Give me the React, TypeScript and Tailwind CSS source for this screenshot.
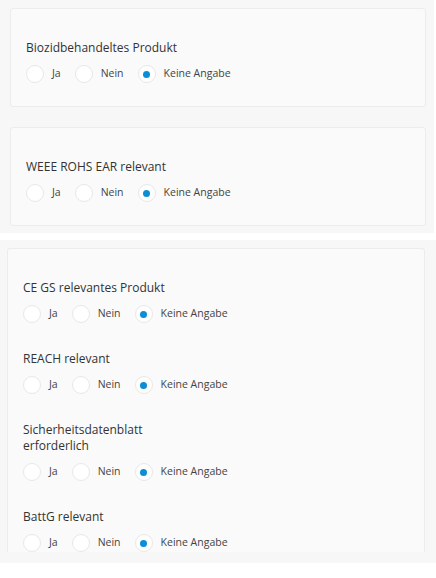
const font = { fontFamily: '"Open Sans", "Noto Sans", sans-serif' };

function RadioGroup() {
  const options = ["Ja", "Nein", "Keine Angabe"];
  return (
    <div className="flex items-center">
      {options.map((o) => {
        const on = o === "Keine Angabe";
        return (
          <label key={o} className="mr-[14px] flex items-center">
            <span className="flex h-[18px] w-[18px] items-center justify-center rounded-full border border-[#e8e8e8] bg-white">
              {on && <span className="h-[7px] w-[7px] rounded-full bg-[#0a8ed6]" />}
            </span>
            <span className="ml-[8px] text-[10.5px] text-[#444]">{o}</span>
          </label>
        );
      })}
    </div>
  );
}

function Field({ label }: { label: string }) {
  return (
    <div>
      <p className="mb-[9px] max-w-[160px] text-[12px] leading-[16px] text-[#333]">{label}</p>
      <RadioGroup />
    </div>
  );
}

export default function App() {
  return (
    <div className="h-[578px] w-[436px] overflow-hidden bg-white" style={font}>
      <div className="flex w-[434px] flex-col gap-[20px] bg-[#f7f7f7] pb-[7px] pl-[10px] pr-[8px] pt-[8px]">
        <div className="rounded-[3px] border border-[#ececec] bg-[#fafafa] px-[15px] pb-[23px] pt-[30px]">
          <p className="mb-[9px] text-[12px] leading-[17px] text-[#333]">Biozidbehandeltes Produkt</p>
          <RadioGroup />
        </div>
        <div className="rounded-[3px] border border-[#ececec] bg-[#fafafa] px-[15px] pb-[23px] pt-[30px]">
          <p className="mb-[9px] text-[12px] leading-[17px] text-[#333]">WEEE ROHS EAR relevant</p>
          <RadioGroup />
        </div>
      </div>
      <div className="mt-[7px] h-[323px] overflow-hidden bg-[#f7f7f7] pl-[7px] pr-[11px] pt-[8px]">
        <div className="flex flex-col gap-[28px] rounded-t-[3px] border border-b-0 border-[#ececec] bg-[#fafafa] px-[15px] pt-[31px]">
          <Field label="CE GS relevantes Produkt" />
          <Field label="REACH relevant" />
          <Field label="Sicherheitsdatenblatt erforderlich" />
          <Field label="BattG relevant" />
        </div>
      </div>
    </div>
  );
}
